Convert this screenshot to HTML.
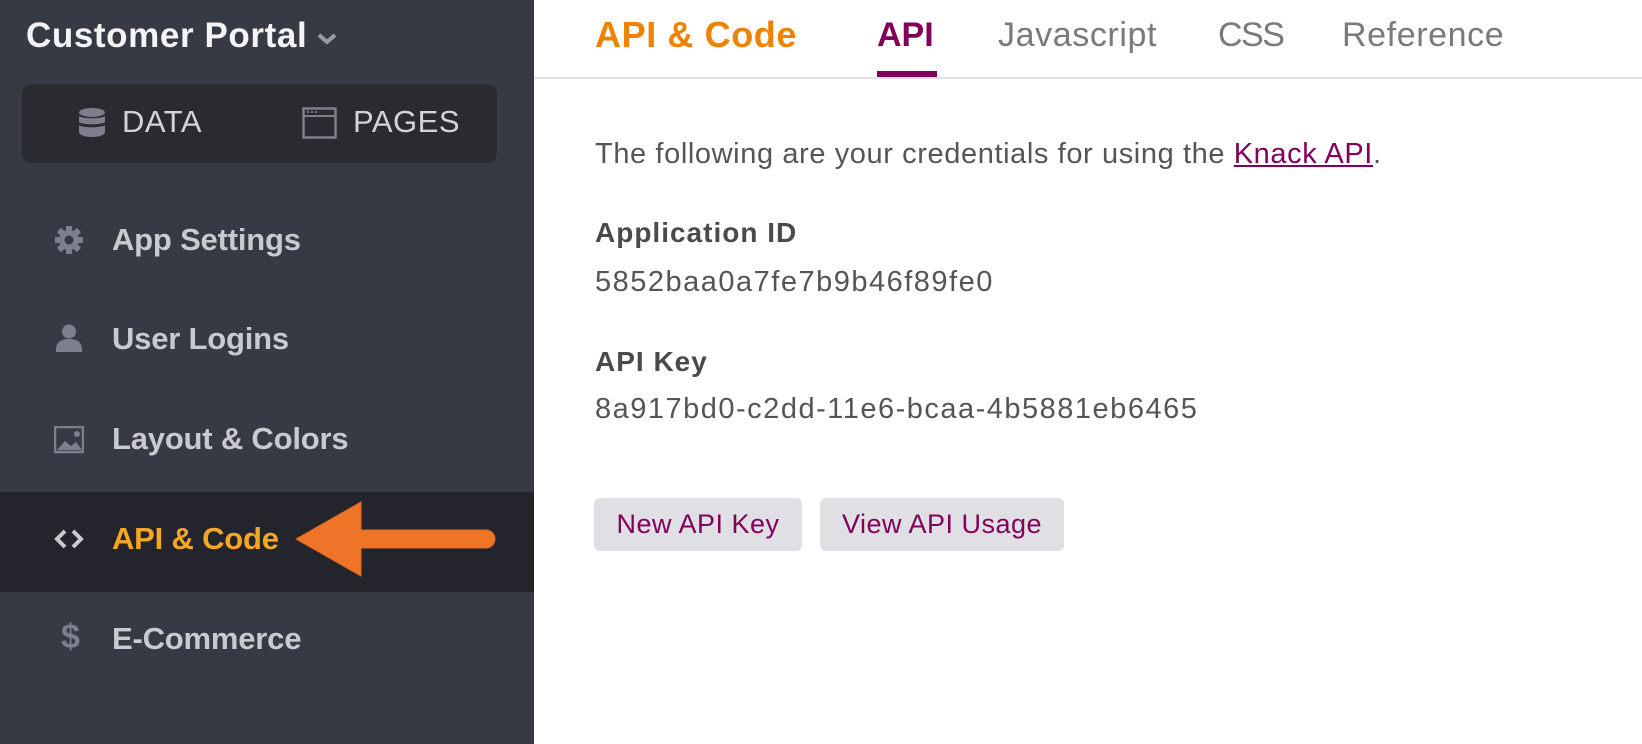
<!DOCTYPE html>
<html><head><meta charset="utf-8"><style>
*{margin:0;padding:0;box-sizing:border-box}
body{width:1642px;height:744px;overflow:hidden;background:#fff;font-family:"Liberation Sans",sans-serif;position:relative}
.side{position:absolute;left:0;top:0;width:534px;height:744px;background:#363a45}
.abs{position:absolute;white-space:nowrap}
.title{left:26px;top:16px;font-size:35px;color:#f4f4f6;font-weight:bold;letter-spacing:0.6px}
.box{left:22px;top:84px;width:475px;height:79px;background:#2a2b31;border-radius:10px}
.bt{font-size:31px;color:#d4d4d8;top:104px;letter-spacing:0.5px}
.item{font-size:31px;color:#c9cacf;font-weight:bold;left:112px;letter-spacing:-0.2px}
.hl{left:0;top:492px;width:534px;height:100px;background:#24252c}
.ic{position:absolute;left:54px}
.main{font-size:36px;font-weight:bold;top:14px}
.tab{font-size:34px;color:#7a7a7e;top:16px}
.p{font-size:29px;color:#555;left:595px;letter-spacing:0.6px}
.v{letter-spacing:1.5px}
.h{font-size:28px;font-weight:bold;color:#4a4a4e;left:595px;letter-spacing:1px}
.btn{top:498px;height:53px;background:#e0dfe4;border-radius:6px;color:#80005c;font-size:27px;line-height:53px;text-align:center;letter-spacing:0.5px}
</style></head><body>
<div class="side"></div>
<div class="abs title">Customer Portal</div>
<svg class="abs" style="left:316px;top:32px" width="22" height="14" viewBox="0 0 22 14"><path d="M3 3l8 7 8-7" stroke="#9a9ca5" stroke-width="4" fill="none"/></svg>
<div class="abs box"></div>
<svg class="abs" style="left:79px;top:108px" width="26" height="30" viewBox="0 0 26 30"><g fill="#7d808c"><ellipse cx="13" cy="4.5" rx="13" ry="4.5"/><path d="M0 8c3 3 23 3 26 0v6c-3 3-23 3-26 0z"/><path d="M0 17c3 3 23 3 26 0v7c0 3-6 5-13 5S0 27 0 24z"/></g></svg>
<div class="abs bt" style="left:122px">DATA</div>
<svg class="abs" style="left:302px;top:107px" width="35" height="32" viewBox="0 0 35 32"><rect x="1.5" y="1.5" width="32" height="29" fill="none" stroke="#7d808c" stroke-width="2.5"/><line x1="1.5" y1="9" x2="33.5" y2="9" stroke="#7d808c" stroke-width="2"/><g fill="#7d808c"><rect x="5" y="4" width="2" height="2"/><rect x="9" y="4" width="2" height="2"/><rect x="13" y="4" width="2" height="2"/></g></svg>
<div class="abs bt" style="left:353px">PAGES</div>
<div class="abs hl"></div>
<svg class="ic" style="top:225px" width="30" height="30" viewBox="0 0 30 30"><g fill="#7d808c"><circle cx="15" cy="15" r="10"/><g stroke="#7d808c" stroke-width="6"><line x1="15" y1="1" x2="15" y2="29"/><line x1="1" y1="15" x2="29" y2="15"/><line x1="5" y1="5" x2="25" y2="25"/><line x1="25" y1="5" x2="5" y2="25"/></g></g><circle cx="15" cy="15" r="4.5" fill="#363a45"/></svg>
<div class="abs item" style="top:222px">App Settings</div>
<svg class="ic" style="top:324px" width="30" height="30" viewBox="0 0 30 30"><g fill="#7d808c"><circle cx="15" cy="7.5" r="7"/><path d="M2 26c0-8 5-11 13-11s13 3 13 11v2H2z"/></g></svg>
<div class="abs item" style="top:321px">User Logins</div>
<svg class="ic" style="top:426px" width="30" height="28" viewBox="0 0 30 28"><rect x="1" y="1" width="28" height="25" fill="none" stroke="#7d808c" stroke-width="2.5"/><path d="M3 24l8-9 6 5 5-4 6 8z" fill="#7d808c"/><circle cx="23" cy="8" r="3" fill="#7d808c"/></svg>
<div class="abs item" style="top:421px">Layout &amp; Colors</div>
<svg class="ic" style="top:528px" width="30" height="22" viewBox="0 0 30 22"><path d="M11 3l-8 8 8 8M19 3l8 8-8 8" stroke="#c9cacf" stroke-width="4" fill="none"/></svg>
<div class="abs item" style="top:521px;color:#f5a623">API &amp; Code</div>
<div class="abs" style="left:61px;top:618px;font-size:34px;font-weight:bold;color:#7d808c">$</div>
<div class="abs item" style="top:621px">E-Commerce</div>
<svg class="abs" style="left:290px;top:495px" width="210" height="90" viewBox="290 495 210 90"><path d="M296 539L361 502V530H486a9 9 0 0 1 0 18H361V576Z" fill="#f07427" stroke="#e06a20" stroke-width="1"/></svg>
<div class="abs main" style="left:595px;color:#ef8200;letter-spacing:0.6px">API &amp; Code</div>
<div class="abs tab" style="left:877px;color:#80005c;font-weight:bold">API</div>
<div class="abs tab" style="left:998px;letter-spacing:0.6px">Javascript</div>
<div class="abs tab" style="left:1218px;letter-spacing:-1.5px">CSS</div>
<div class="abs tab" style="left:1342px;letter-spacing:0.6px">Reference</div>
<div class="abs" style="left:877px;top:71px;width:60px;height:6px;background:#80005c"></div>
<div class="abs" style="left:534px;top:77px;width:1108px;height:2px;background:#e2e2e6"></div>
<div class="abs p" style="top:138px">The following are your credentials for using the <span style="color:#80005c;text-decoration:underline">Knack API</span>.</div>
<div class="abs h" style="top:217px">Application ID</div>
<div class="abs p v" style="top:266px">5852baa0a7fe7b9b46f89fe0</div>
<div class="abs h" style="top:346px">API Key</div>
<div class="abs p v" style="top:393px">8a917bd0-c2dd-11e6-bcaa-4b5881eb6465</div>
<div class="abs btn" style="left:594px;width:208px">New API Key</div>
<div class="abs btn" style="left:820px;width:244px">View API Usage</div>
</body></html>
